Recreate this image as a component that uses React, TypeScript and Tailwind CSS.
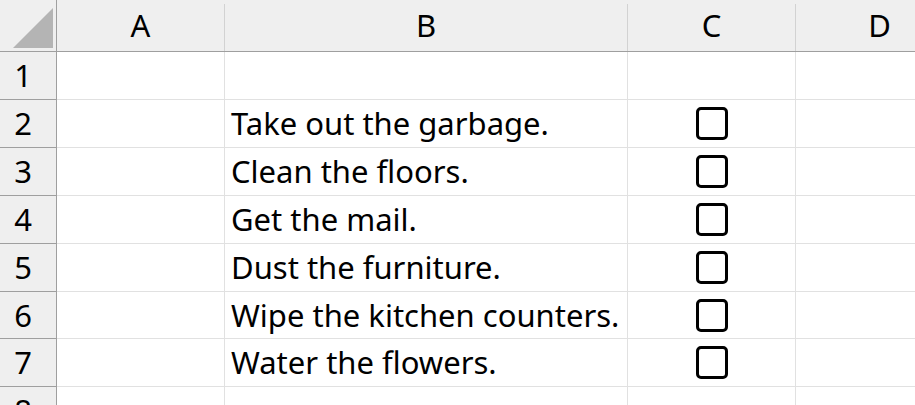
const tasks = [
  '',
  'Take out the garbage.',
  'Clean the floors.',
  'Get the mail.',
  'Dust the furniture.',
  'Wipe the kitchen counters.',
  'Water the flowers.',
  '',
];

function Checkbox() {
  return <div className="h-[33px] w-[32px] rounded-[5px] border-[3px] border-black" />;
}

export default function App() {
  return (
    <div
      className="h-[405px] w-[915px] overflow-hidden bg-white text-black"
      style={{ fontFamily: '"Noto Sans", "Open Sans", sans-serif' }}
    >
      <div className="grid w-[980px] grid-cols-[57px_168px_403px_168px_168px] text-[31px] leading-none">
        {/* header row */}
        <div className="relative h-[52px] border-b border-r border-[#9f9f9f] bg-[#efefef]">
          <svg className="absolute left-[13px] top-[8px]" width="40" height="40" viewBox="0 0 40 40">
            <polygon points="40,0 40,40 0,40" fill="#b4b4b4" />
          </svg>
        </div>
        {['A', 'B', 'C', 'D'].map((l) => (
          <div key={l} className="flex h-[52px] flex-col border-b border-[#9f9f9f] bg-[#efefef] pt-1">
            <div className="flex flex-1 items-center justify-center border-r border-[#d2d2d2] pb-1">
              {l}
            </div>
          </div>
        ))}

        {tasks.map((t, i) => {
          const h = i === 5 ? 'h-[47px]' : 'h-[48px]';
          return (
            <div key={i} className="contents">
              <div
                className={`flex ${h} items-center justify-center border-b border-r border-[#9f9f9f] bg-[#efefef] pr-[10px]`}
              >
                {i + 1}
              </div>
              <div className={`${h} border-b border-r border-[#e1e1e1]`} />
              <div className={`flex ${h} items-center border-b border-r border-[#e1e1e1] pl-[6px]`}>
                {t}
              </div>
              <div className={`flex ${h} items-center justify-center border-b border-r border-[#e1e1e1]`}>
                {t && <Checkbox />}
              </div>
              <div className={`${h} border-b border-r border-[#e1e1e1]`} />
            </div>
          );
        })}
      </div>
    </div>
  );
}
